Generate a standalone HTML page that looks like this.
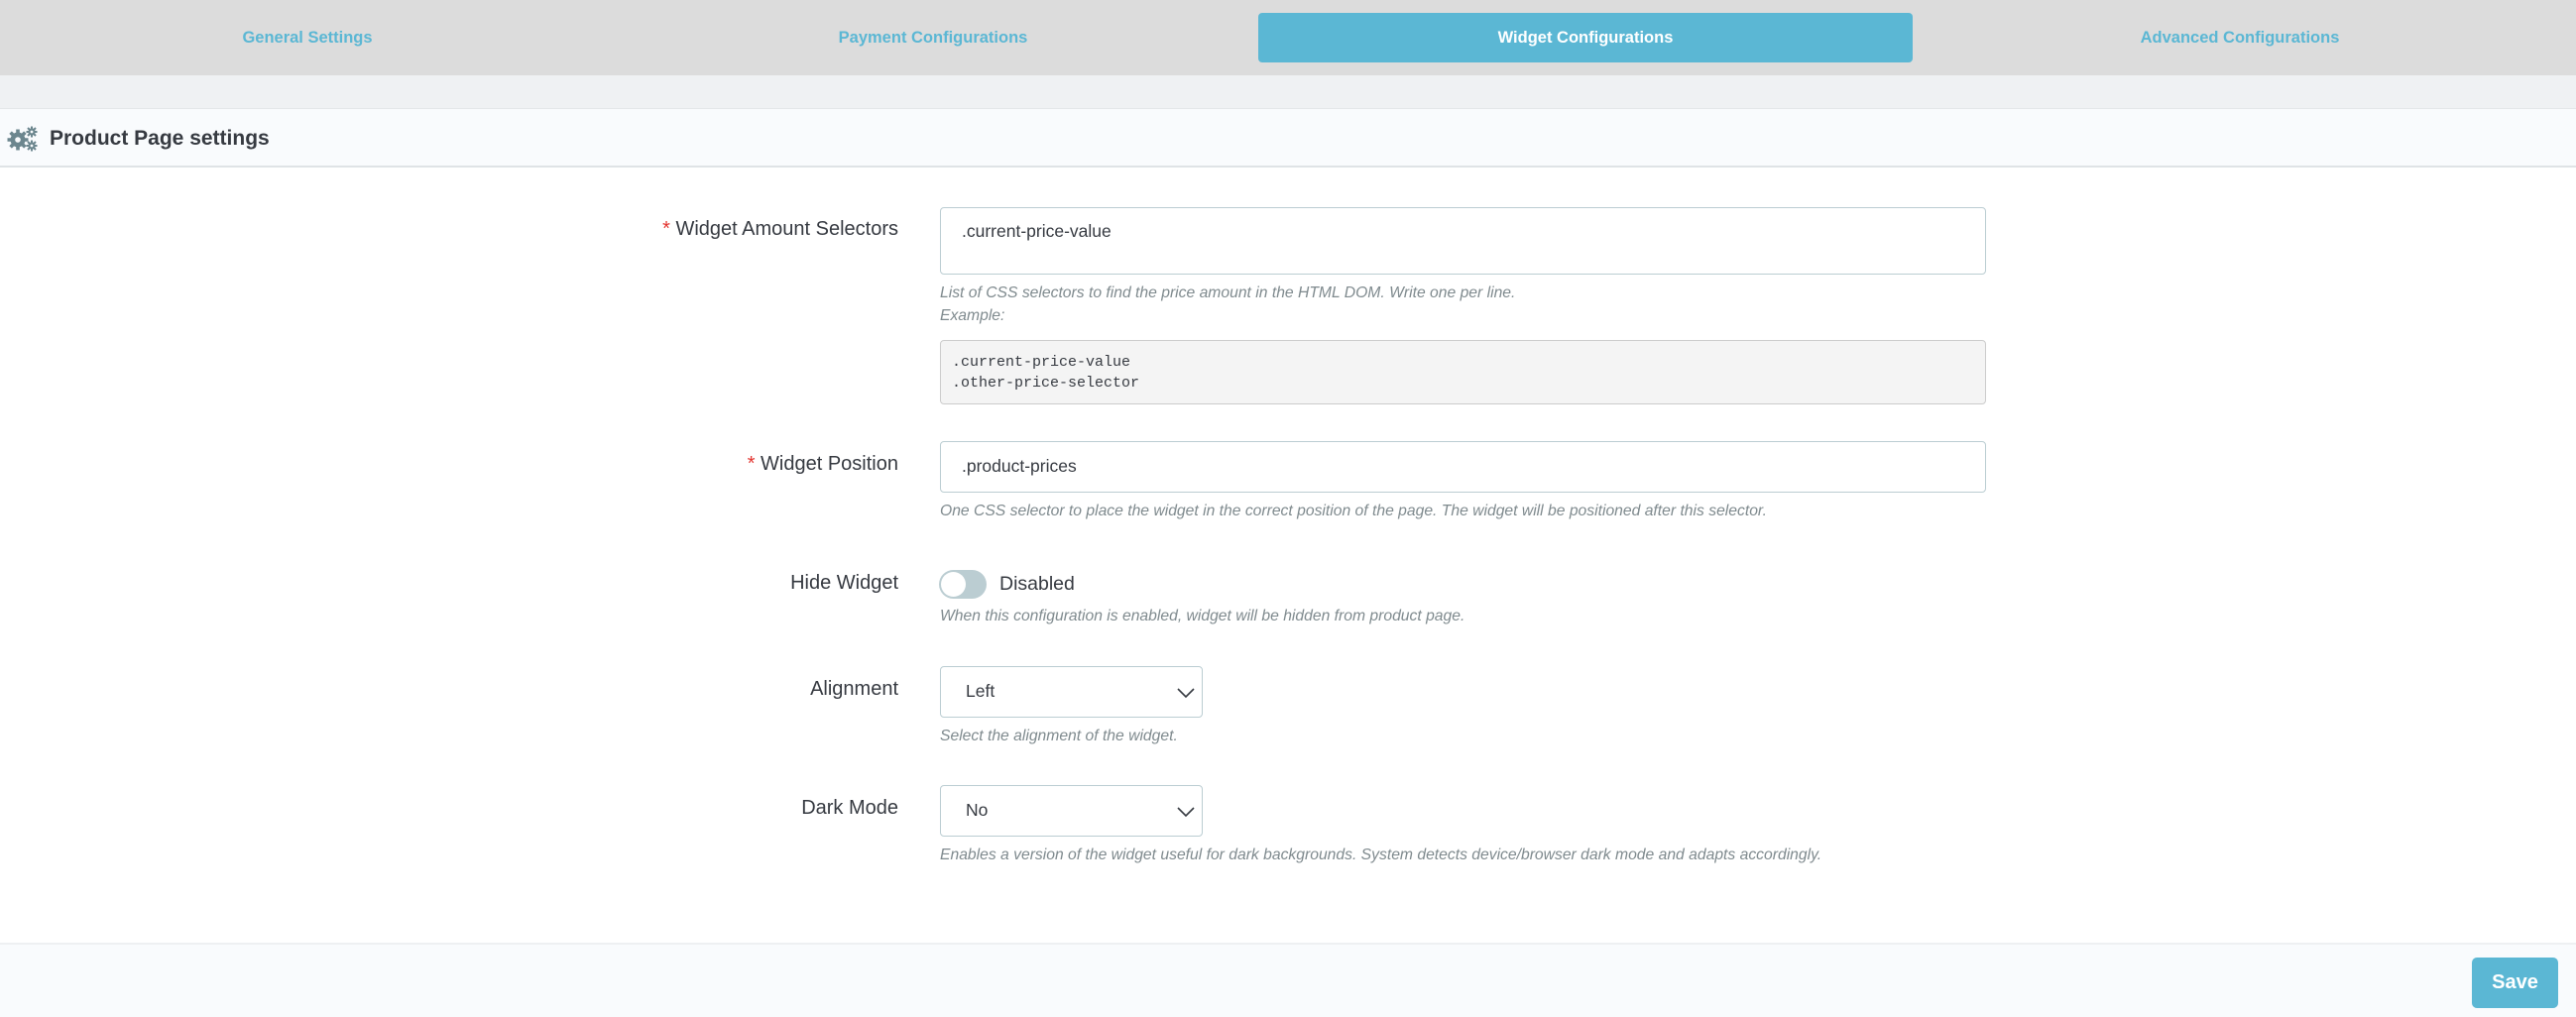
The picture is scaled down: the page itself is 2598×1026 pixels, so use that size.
<!DOCTYPE html>
<html><head><meta charset="utf-8">
<style>
*{box-sizing:border-box;margin:0;padding:0}
body{width:2598px;height:1026px;background:#fff;font-family:"Liberation Sans",sans-serif;position:relative;overflow:hidden;color:#363a41}
.abs{position:absolute}
.tabbar{left:0;top:0;width:2598px;height:76px;background:#dcdcdc}
.tab{top:13px;height:50px;line-height:50px;text-align:center;font-weight:bold;font-size:16.5px;color:#5bb7d4}
.tab.active{background:#5bb7d4;color:#fff;border-radius:4px}
.band{left:0;top:76px;width:2598px;height:33px;background:#eff1f3}
.head{left:0;top:109px;width:2598px;height:60px;background:#f9fbfd;border-top:1px solid #e3e6e9;border-bottom:2px solid #dfe3e6}
.title{left:50px;top:126px;font-size:21px;font-weight:bold;color:#363a41;line-height:28px}
.lbl{right:1692px;font-size:20px;line-height:26px;text-align:right;color:#363a41;white-space:nowrap}
.req{color:#e3342f}
.inp{left:948px;width:1055px;border:1.5px solid #bbcdd2;border-radius:4px;background:#fff;font-size:17.5px;padding-left:21px;color:#363a41}
.help{left:948px;font-size:15.7px;font-style:italic;color:#7f8a8e;line-height:23px;white-space:nowrap}
.pre{left:948px;top:343px;width:1055px;height:65px;background:#f4f4f4;border:1.5px solid #ccc;border-radius:4px;font-family:"Liberation Mono",monospace;font-size:15px;line-height:21px;padding:11px 0 0 11px;color:#363a41}
.sel{left:948px;width:265px;height:52px;border:1.5px solid #bbcdd2;border-radius:4px;background:#fff;font-size:17.5px;line-height:49px;padding-left:25px}
.sel svg{position:absolute;right:6px;top:20px}
.foot{left:0;top:951px;width:2598px;height:75px;background:#f9fbfd;border-top:2px solid #eef0f2}
.save{left:2493px;top:966px;width:87px;height:51px;background:#5bb7d4;border-radius:5px;color:#fff;font-weight:bold;font-size:20px;text-align:center;line-height:51px}
</style></head><body>
<div class="abs tabbar"></div>
<div class="abs tab" style="left:0;width:620px">General Settings</div>
<div class="abs tab" style="left:620px;width:642px">Payment Configurations</div>
<div class="abs tab active" style="left:1269px;width:660px">Widget Configurations</div>
<div class="abs tab" style="left:1929px;width:660px">Advanced Configurations</div>
<div class="abs band"></div>
<div class="abs head"></div>
<svg class="abs" style="left:7px;top:126px" width="32" height="28" viewBox="0 0 32 28">
<g fill="#6c868e">
<circle cx="11" cy="15" r="7.5"/>
<g stroke="#6c868e" stroke-width="3.6"><line x1="11" y1="4.5" x2="11" y2="25.5"/><line x1="0.5" y1="15" x2="21.5" y2="15"/><line x1="3.6" y1="7.6" x2="18.4" y2="22.4"/><line x1="18.4" y1="7.6" x2="3.6" y2="22.4"/></g>
<circle cx="25" cy="7" r="3.6"/>
<g stroke="#6c868e" stroke-width="2"><line x1="25" y1="1.5" x2="25" y2="12.5"/><line x1="19.5" y1="7" x2="30.5" y2="7"/><line x1="21" y1="3" x2="29" y2="11"/><line x1="29" y1="3" x2="21" y2="11"/></g>
<circle cx="25" cy="21" r="3.6"/>
<g stroke="#6c868e" stroke-width="2"><line x1="25" y1="15.5" x2="25" y2="26.5"/><line x1="19.5" y1="21" x2="30.5" y2="21"/><line x1="21" y1="17" x2="29" y2="25"/><line x1="29" y1="17" x2="21" y2="25"/></g>
</g>
<circle cx="11" cy="15" r="2.8" fill="#f9fbfd"/><circle cx="25" cy="7" r="1.4" fill="#f9fbfd"/><circle cx="25" cy="21" r="1.4" fill="#f9fbfd"/>
</svg>
<div class="abs title">Product Page settings</div>

<div class="abs lbl" style="top:218px"><span class="req">*</span> Widget Amount Selectors</div>
<div class="abs inp" style="top:209px;height:68px;padding-top:10px;line-height:26px">.current-price-value</div>
<div class="abs help" style="top:284px">List of CSS selectors to find the price amount in the HTML DOM. Write one per line.</div>
<div class="abs help" style="top:307px">Example:</div>
<div class="abs pre">.current-price-value<br>.other-price-selector</div>

<div class="abs lbl" style="top:455px"><span class="req">*</span> Widget Position</div>
<div class="abs inp" style="top:445px;height:52px;line-height:49px">.product-prices</div>
<div class="abs help" style="top:504px">One CSS selector to place the widget in the correct position of the page. The widget will be positioned after this selector.</div>

<div class="abs lbl" style="top:575px">Hide Widget</div>
<div class="abs" style="left:947px;top:575px;width:48px;height:29px;border-radius:15px;background:#bbcdd2"></div>
<div class="abs" style="left:949px;top:577px;width:25px;height:25px;border-radius:50%;background:#fff"></div>
<div class="abs" style="left:1008px;top:575px;font-size:19.5px;line-height:28px;color:#363a41">Disabled</div>
<div class="abs help" style="top:610px">When this configuration is enabled, widget will be hidden from product page.</div>

<div class="abs lbl" style="top:682px">Alignment</div>
<div class="abs sel" style="top:672px">Left<svg width="20" height="12" viewBox="0 0 20 12"><path d="M2 2 L10 10 L18 2" fill="none" stroke="#363a41" stroke-width="1.6"/></svg></div>
<div class="abs help" style="top:731px">Select the alignment of the widget.</div>

<div class="abs lbl" style="top:802px">Dark Mode</div>
<div class="abs sel" style="top:792px">No<svg width="20" height="12" viewBox="0 0 20 12"><path d="M2 2 L10 10 L18 2" fill="none" stroke="#363a41" stroke-width="1.6"/></svg></div>
<div class="abs help" style="top:851px">Enables a version of the widget useful for dark backgrounds. System detects device/browser dark mode and adapts accordingly.</div>

<div class="abs foot"></div>
<div class="abs save">Save</div>
</body></html>
